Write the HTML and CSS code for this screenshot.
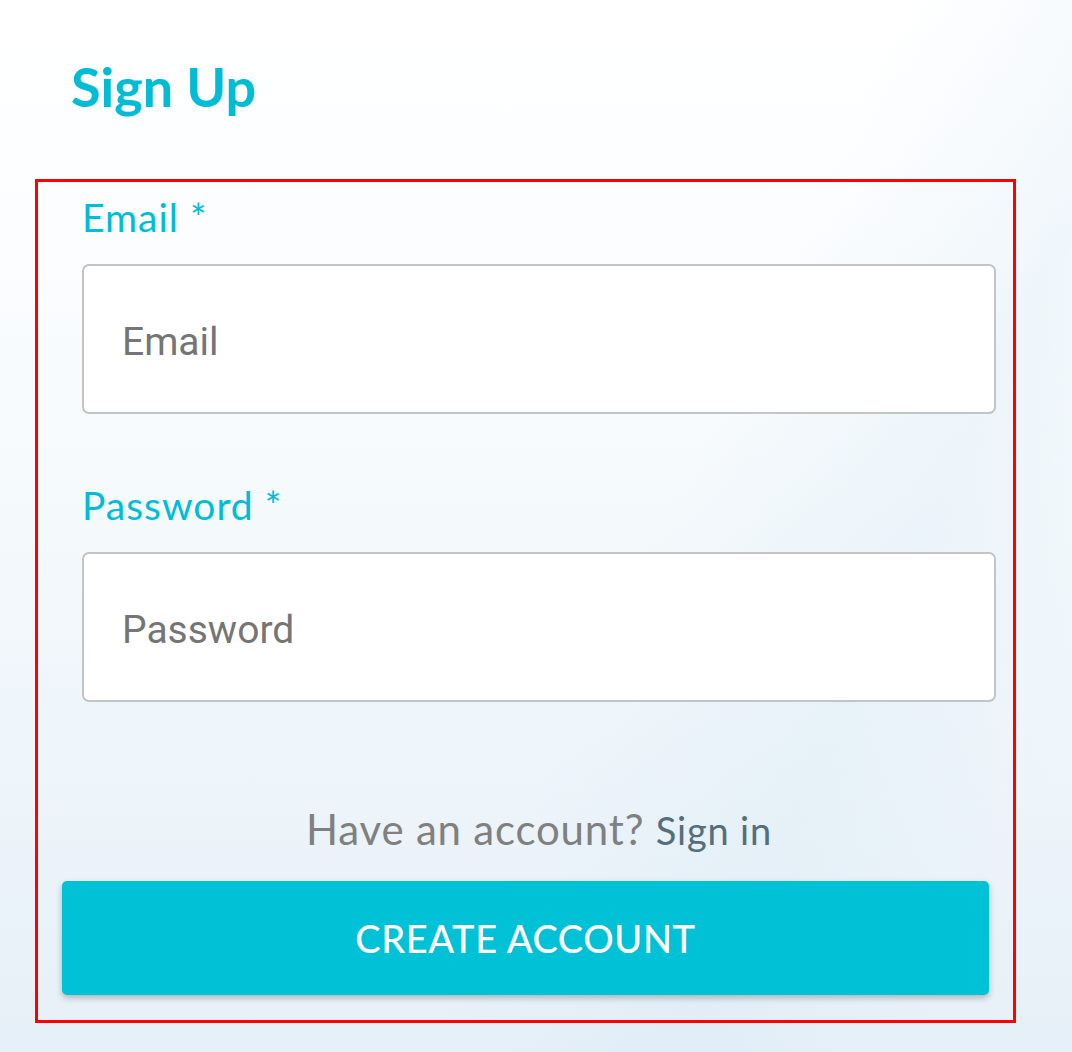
FILE: index.html
```html
<!DOCTYPE html>
<html lang="en">
<head>
  <meta charset="UTF-8" />
  <meta name="viewport" content="width=device-width, initial-scale=1" />
  <title>Sign Up</title>
  <link rel="stylesheet" href="styles.css">
</head>
<body>

  <main class="page">
    <h1 class="title">Sign Up</h1>

    <!-- Sign up form -->
    <form class="signup-box" action="/signup" method="POST">
      <div class="field">
        <label for="email">Email *</label>
        <input type="email" id="email" name="email" placeholder="Email" required />
      </div>

      <div class="field">
        <label for="password">Password *</label>
        <input type="password" id="password" name="password" placeholder="Password" required />
      </div>

      <p class="switch">Have an account? <a href="#">Sign in</a></p>

      <button type="submit">CREATE ACCOUNT</button>
    </form>
  </main>

</body>
</html>
```

FILE: styles.css
```css
/* Global reset */
* {
  margin: 0;
  padding: 0;
  box-sizing: border-box;
}

html,
body {
  height: 100%;
}

body {
  font-family: Lato, "Open Sans", sans-serif;
  background:
    linear-gradient(115deg, rgba(255,255,255,0) 58%, rgba(214,232,244,0.3) 75%, rgba(255,255,255,0) 90%),
    linear-gradient(to bottom, #ffffff 0%, #fdfeff 15%, #f4f9fc 50%, #e6f0f8 100%);
  overflow: hidden;
}

.page {
  padding: 54px 56px 0 35px;
}

/* Heading */
.title {
  padding-left: 36px;
  font-size: 54px;
  line-height: 65px;
  font-weight: 700;
  color: #00bcd4;
}

/* Form box (outlined) */
.signup-box {
  margin-top: 60px;
  height: 844px;
  border: 3px solid #ff0000;
  padding: 12px 17px 25px 44px;
  display: flex;
  flex-direction: column;
}

.field {
  display: flex;
  flex-direction: column;
}
.field + .field {
  margin-top: 68px;
}

.field label {
  font-size: 39px;
  line-height: 46px;
  letter-spacing: 1px;
  color: #00bcd4;
  margin-bottom: 24px;
}

.field input {
  height: 150px;
  width: 100%;
  border: 2px solid #c4c4c4;
  border-radius: 7px;
  background: #fff;
  padding: 5px 38px 0;
  font-family: Roboto, sans-serif;
  font-size: 39px;
  color: #333;
  outline: none;
}
.field input::placeholder {
  color: #757575;
}

/* Switch to sign in */
.switch {
  margin-top: 103px;
  text-align: center;
  font-size: 42px;
  line-height: 48px;
  letter-spacing: 0.8px;
  color: #808080;
}
.switch a {
  font-size: 38px;
  color: #546e7a;
  text-decoration: none;
}

/* Submit button */
.signup-box button {
  margin: 27px 7px 0 -20px;
  height: 115px;
  border: none;
  border-radius: 5px;
  background-color: #00c1d6;
  color: #fff;
  font-family: Lato, "Open Sans", sans-serif;
  font-size: 38px;
  font-weight: 500;
  letter-spacing: 0.6px;
  box-shadow: 0 3px 6px rgba(0, 0, 0, 0.25);
  cursor: pointer;
}
```
